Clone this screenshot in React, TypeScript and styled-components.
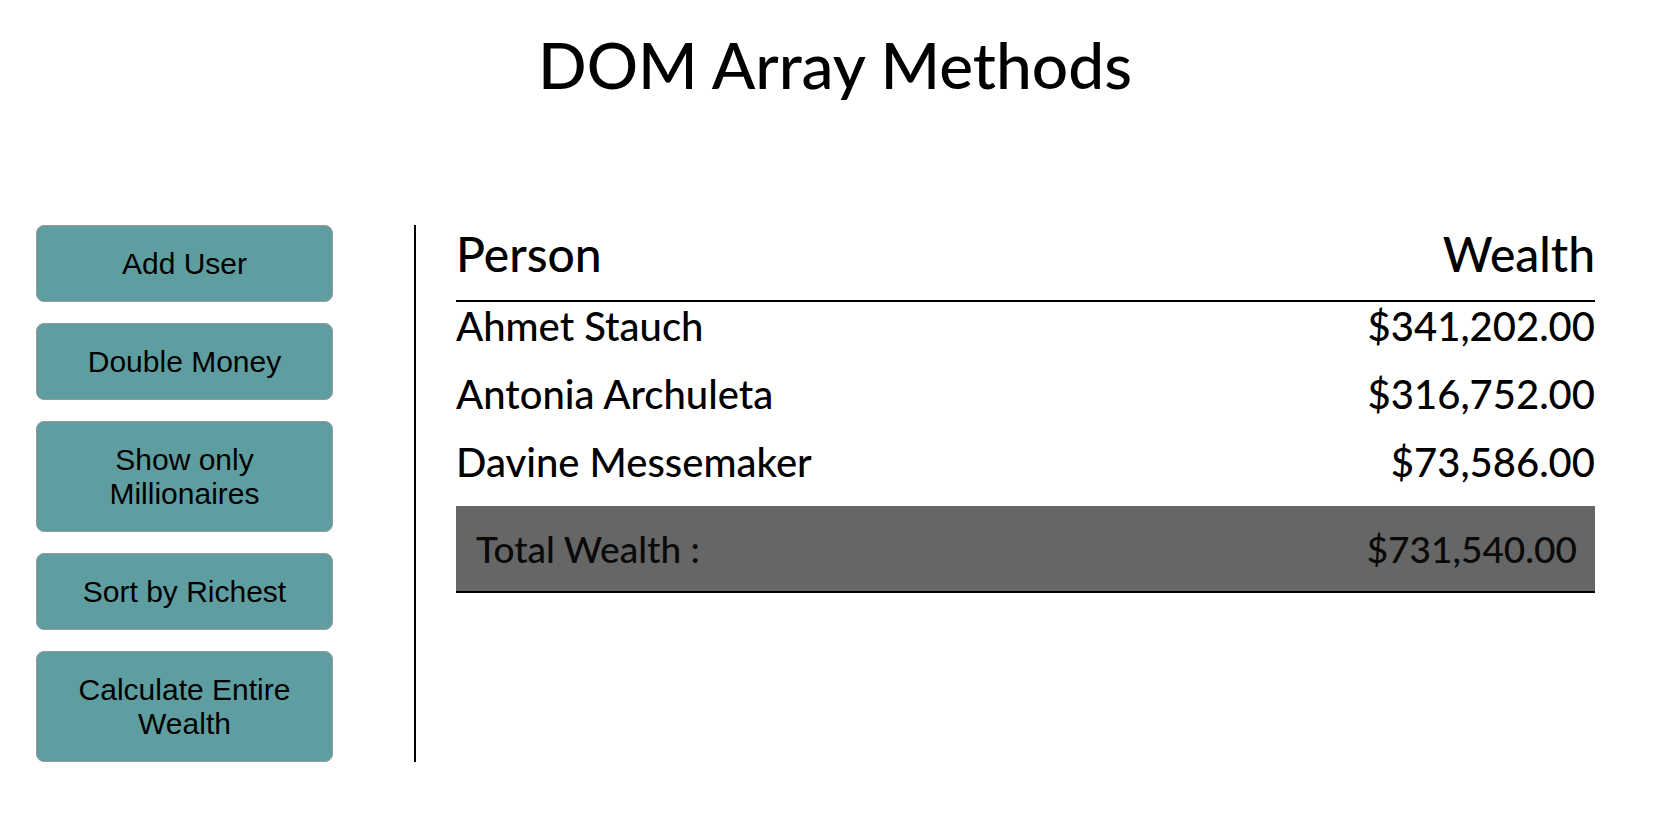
import React from 'react';
import styled, { createGlobalStyle } from 'styled-components';

const GlobalStyle = createGlobalStyle`
  body {
    margin: 0;
    background: #fff;
    font-family: Lato, "Open Sans", sans-serif;
    color: #000;
  }
`;

const Title = styled.h1`
  margin: 26px 0 122px;
  padding-left: 10px;
  font-size: 64px;
  font-weight: 500;
  line-height: normal;
  text-align: center;
`;

const Layout = styled.div`
  display: flex;
  align-items: flex-start;
`;

const Sidebar = styled.aside`
  display: flex;
  flex-direction: column;
  gap: 21px;
  padding: 0 81px 0 36px;
  border-right: 2px solid #000;
`;

const ActionButton = styled.button`
  width: 297px;
  padding: 20.5px 20px;
  background: #5f9ea0;
  border: 1px solid #999;
  border-radius: 8px;
  color: #000;
  font-family: "Liberation Sans", Arial, sans-serif;
  font-size: 30px;
  line-height: normal;
  text-align: center;
  cursor: pointer;
`;

const Main = styled.main`
  flex: 1;
  padding: 0 65px 0 40px;
`;

const HeaderRow = styled.div`
  display: flex;
  justify-content: space-between;
  padding: 0 0 18px;
  border-bottom: 2px solid #000;
  font-size: 48px;
  font-weight: 500;
  line-height: normal;
`;

const PersonRow = styled.div`
  display: flex;
  justify-content: space-between;
  margin: 0 0 20px;
  font-size: 40px;
  font-weight: 500;
  line-height: normal;
`;

const TotalRow = styled.div`
  display: flex;
  justify-content: space-between;
  padding: 20px 18px 20px 20px;
  background: #666;
  border-bottom: 2px solid #000;
  font-size: 37px;
  font-weight: 500;
  line-height: normal;
  color: #0a0a0a;
`;

const users = [
  { name: 'Ahmet Stauch', money: 341202 },
  { name: 'Antonia Archuleta', money: 316752 },
  { name: 'Davine Messemaker', money: 73586 },
];

const formatMoney = (n: number) =>
  '$' + n.toLocaleString('en-US', { minimumFractionDigits: 2, maximumFractionDigits: 2 });

const actions = ['Add User', 'Double Money', 'Show only Millionaires', 'Sort by Richest', 'Calculate Entire Wealth'];

const App = () => {
  const total = users.reduce((acc, u) => acc + u.money, 0);
  return (
    <>
      <GlobalStyle />
      <Title>DOM Array Methods</Title>
      <Layout>
        <Sidebar>
          {actions.map((a) => (
            <ActionButton key={a}>{a}</ActionButton>
          ))}
        </Sidebar>
        <Main>
          <HeaderRow>
            <span>Person</span>
            <span>Wealth</span>
          </HeaderRow>
          {users.map((u) => (
            <PersonRow key={u.name}>
              <span>{u.name}</span>
              <span>{formatMoney(u.money)}</span>
            </PersonRow>
          ))}
          <TotalRow>
            <span>Total Wealth :</span>
            <span>{formatMoney(total)}</span>
          </TotalRow>
        </Main>
      </Layout>
    </>
  );
};

export default App;
